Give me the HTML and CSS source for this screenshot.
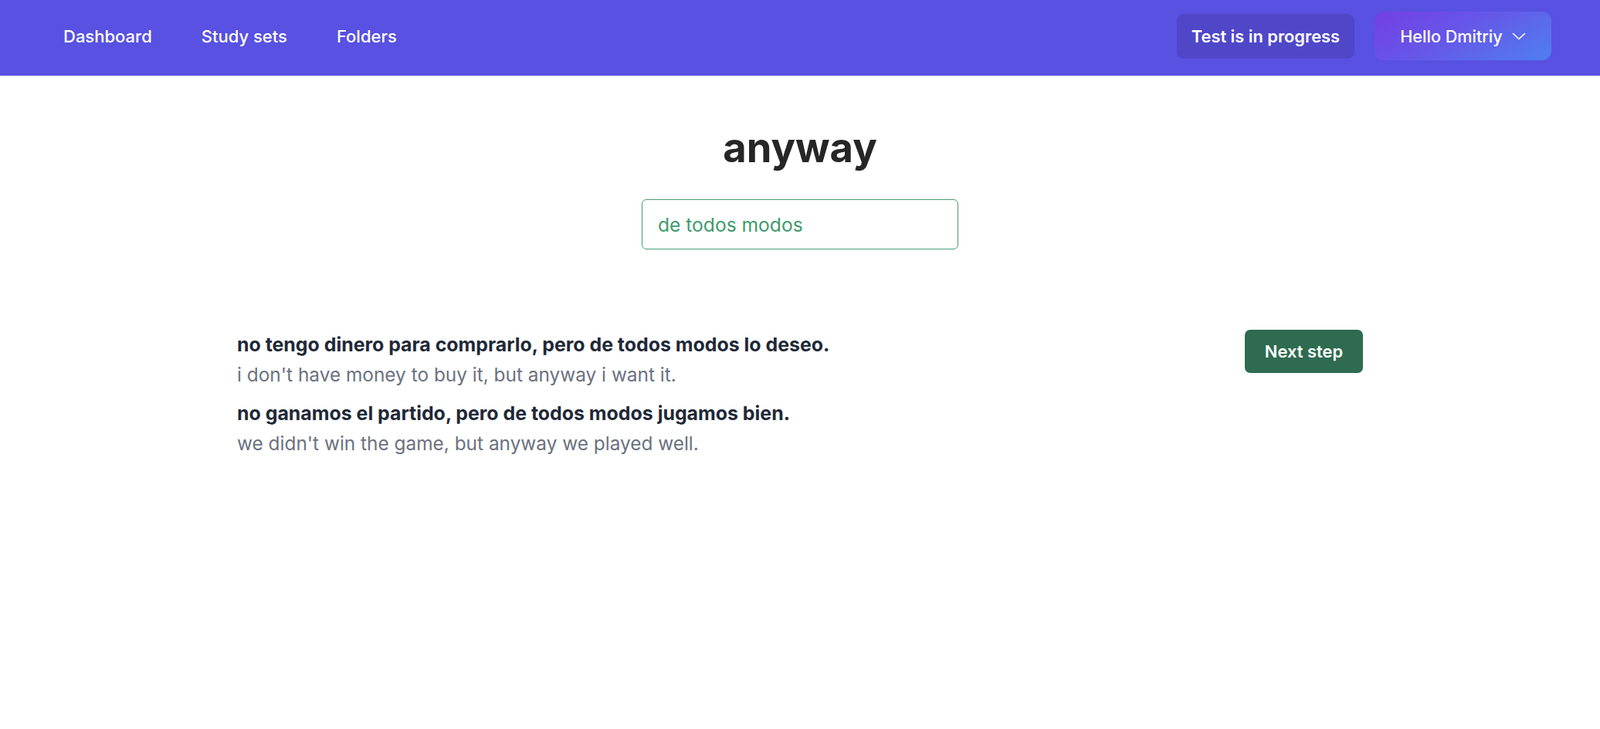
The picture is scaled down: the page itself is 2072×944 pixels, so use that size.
FILE: index.html
```html
<!DOCTYPE html>
<html lang="en">
<head>
<meta charset="utf-8">
<title>Test</title>
<link rel="stylesheet" href="styles.css">
</head>
<body>
<header class="nav">
  <nav class="nav-links">
    <a class="nav-link" href="#">Dashboard</a>
    <a class="nav-link" href="#">Study sets</a>
    <a class="nav-link" href="#">Folders</a>
  </nav>
  <div class="nav-right">
    <a class="progress-btn" href="#">Test is in progress</a>
    <button class="user-btn" type="button">
      <span>Hello Dmitriy</span>
      <svg class="chevron" width="18" height="10" viewBox="0 0 18 10" fill="none" stroke="#fff" stroke-width="1.6" stroke-linecap="round" stroke-linejoin="round"><path d="M1.5 1.5 L9 8.5 L16.5 1.5"/></svg>
    </button>
  </div>
</header>
<main class="main">
  <h1 class="word">anyway</h1>
  <div class="answer-wrap">
    <input class="answer" type="text" value="de todos modos" readonly>
  </div>
  <section class="examples">
    <div class="sentences">
      <div class="sentence">
        <p class="es">no tengo dinero para comprarlo, pero de todos modos lo deseo.</p>
        <p class="en">i don't have money to buy it, but anyway i want it.</p>
      </div>
      <div class="sentence">
        <p class="es">no ganamos el partido, pero de todos modos jugamos bien.</p>
        <p class="en">we didn't win the game, but anyway we played well.</p>
      </div>
    </div>
    <button class="next-btn" type="button">Next step</button>
  </section>
</main>
</body>
</html>
```
FILE: styles.css
```css
* { box-sizing: border-box; }
html, body { margin: 0; padding: 0; background: #ffffff; }
body { font-family: Inter, "Noto Sans", sans-serif; color: #1f2937; }

.nav {
  height: 98px;
  background: #5851e1;
  display: flex;
  align-items: center;
  justify-content: space-between;
  padding: 0 63px 5px 82px;
}
.nav-links { display: flex; gap: 64px; align-items: center; }
.nav-link {
  color: #ffffff;
  text-decoration: none;
  font-size: 22px;
  font-weight: 500;
}
.nav-right { display: flex; align-items: center; gap: 26px; }
.progress-btn {
  height: 58px;
  display: flex;
  align-items: center;
  padding: 0 19px;
  background: #4f47c8;
  border-radius: 9px;
  color: #fff;
  text-decoration: none;
  font-size: 21.8px;
  font-weight: 600;
}
.user-btn {
  height: 63px;
  width: 229px;
  display: flex;
  align-items: center;
  justify-content: center;
  gap: 12px;
  border: 0;
  border-radius: 12px;
  background: linear-gradient(150deg, #743fe4 0%, #6657e8 45%, #4f7ff0 100%);
  color: #fff;
  font-family: Inter, "Noto Sans", sans-serif;
  font-size: 21.6px;
  font-weight: 500;
  padding: 0;
}
.chevron { margin-top: 1px; }

.main { padding-top: 1px; }
.word {
  margin: 58px 0 0;
  text-align: center;
  font-size: 52.5px;
  line-height: 68px;
  font-weight: 700;
  color: #262626;
}
.answer-wrap { display: flex; justify-content: center; margin-top: 33px; }
.answer {
  width: 410px;
  height: 65px;
  border: 1.5px solid #4a9d72;
  border-radius: 6px;
  padding: 0 20px;
  font-family: Inter, "Noto Sans", sans-serif;
  font-size: 24.6px;
  color: #3f9a6b;
  outline: none;
  background: #fff;
}

.examples {
  width: 1458px;
  margin: 104px auto 0;
  display: flex;
  justify-content: space-between;
  align-items: flex-start;
}
.sentences { display: flex; flex-direction: column; gap: 11px; }
.sentence p { margin: 0; }
.es {
  font-size: 24.9px;
  line-height: 39px;
  font-weight: 700;
  color: #1f2937;
}
.en {
  font-size: 24.4px;
  line-height: 39px;
  font-weight: 400;
  color: #6b7280;
}
.next-btn {
  width: 153px;
  height: 56px;
  margin-top: 0;
  border: 0;
  border-radius: 7px;
  background: #2e6b51;
  color: #fff;
  font-family: Inter, "Noto Sans", sans-serif;
  font-size: 21.9px;
  font-weight: 600;
  padding: 0;
}
```
